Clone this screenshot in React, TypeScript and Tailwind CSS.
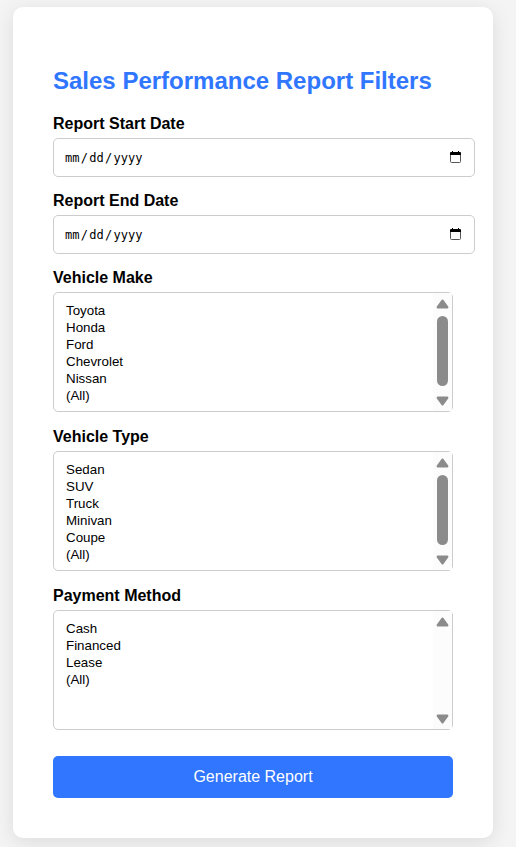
import React from "react";

const Triangle = ({ down = false }: { down?: boolean }) => (
  <svg width="13" height="10" viewBox="0 0 13 10" className={down ? "rotate-180" : ""}>
    <path d="M6.5 1.7 L11.2 8.2 H1.8 Z" fill="#8b8b8b" stroke="#8b8b8b" strokeWidth="2.4" strokeLinejoin="round" />
  </svg>
);

function DateField({ label }: { label: string }) {
  return (
    <div className="mb-[15px]">
      <div className="h-[19px] text-[16px] leading-[18px] font-bold">{label}</div>
      <div className="mt-1 flex h-[39px] w-[422px] items-center justify-between rounded-[5px] border border-[#ccc] bg-white pr-[13px] pl-[10px]">
        <div className="flex pt-[2px] font-['DejaVu_Sans_Mono',monospace] text-[12px] leading-[15px]">
          <span className="px-px">mm</span>
          <span className="px-[0.3px]">/</span>
          <span className="px-px">dd</span>
          <span className="px-[0.3px]">/</span>
          <span className="px-px">yyyy</span>
        </div>
        <svg width="11" height="12" viewBox="0 0 11 12" className="mb-px">
          <path d="M.5 3.5v7q0 1 1 1h8q1 0 1-1v-7" fill="none" stroke="#555" />
          <path d="M0 2q0-1 1-1h1V0h1v1h5V0h1v1h1q1 0 1 1v2H0z" />
        </svg>
      </div>
    </div>
  );
}

function ListField({ label, items, thumb }: { label: string; items: string[]; thumb: boolean }) {
  return (
    <div className="mb-4">
      <div className="h-[19px] text-[16px] leading-[18px] font-bold">{label}</div>
      <div className="mt-1 flex h-[120px] w-[400px] justify-between rounded-[5px] border border-[#ccc] bg-white">
        <ul className="pt-[9px] pl-3 text-[13.333px] leading-[17px]">
          {items.map((item) => (
            <li key={item} className="h-[17px]">{item}</li>
          ))}
        </ul>
        <div className="flex w-[19px] flex-col items-center bg-[#fcfcfc] pt-[6px] pb-[5px]">
          <Triangle />
          {thumb && <div className="mt-[7px] h-[70px] w-[11px] rounded-full bg-[#8b8b8b]" />}
          <div className="mt-auto"><Triangle down /></div>
        </div>
      </div>
    </div>
  );
}

export default function App() {
  return (
    <main className="h-[847px] w-[516px] overflow-hidden bg-[#f4f4f4] pt-[7px] pl-[13px] font-['Liberation_Sans',Arial,sans-serif] text-black">
      <section className="h-[831px] w-[480px] rounded-[10px] bg-white px-10 pt-[60px] shadow-[0_4px_20px_rgba(0,0,0,0.1)]">
        <h1 className="mb-5 h-[28px] text-[24px] leading-[28px] font-bold whitespace-nowrap text-[#3076ff]">Sales Performance Report Filters</h1>
        <DateField label="Report Start Date" />
        <DateField label="Report End Date" />
        <ListField label="Vehicle Make" items={["Toyota", "Honda", "Ford", "Chevrolet", "Nissan", "(All)"]} thumb />
        <ListField label="Vehicle Type" items={["Sedan", "SUV", "Truck", "Minivan", "Coupe", "(All)"]} thumb />
        <ListField label="Payment Method" items={["Cash", "Financed", "Lease", "(All)"]} thumb={false} />
        <button className="mt-[10px] h-[42px] w-full rounded-[5px] bg-[#3076ff] text-[16px] text-white">Generate Report</button>
      </section>
    </main>
  );
}
